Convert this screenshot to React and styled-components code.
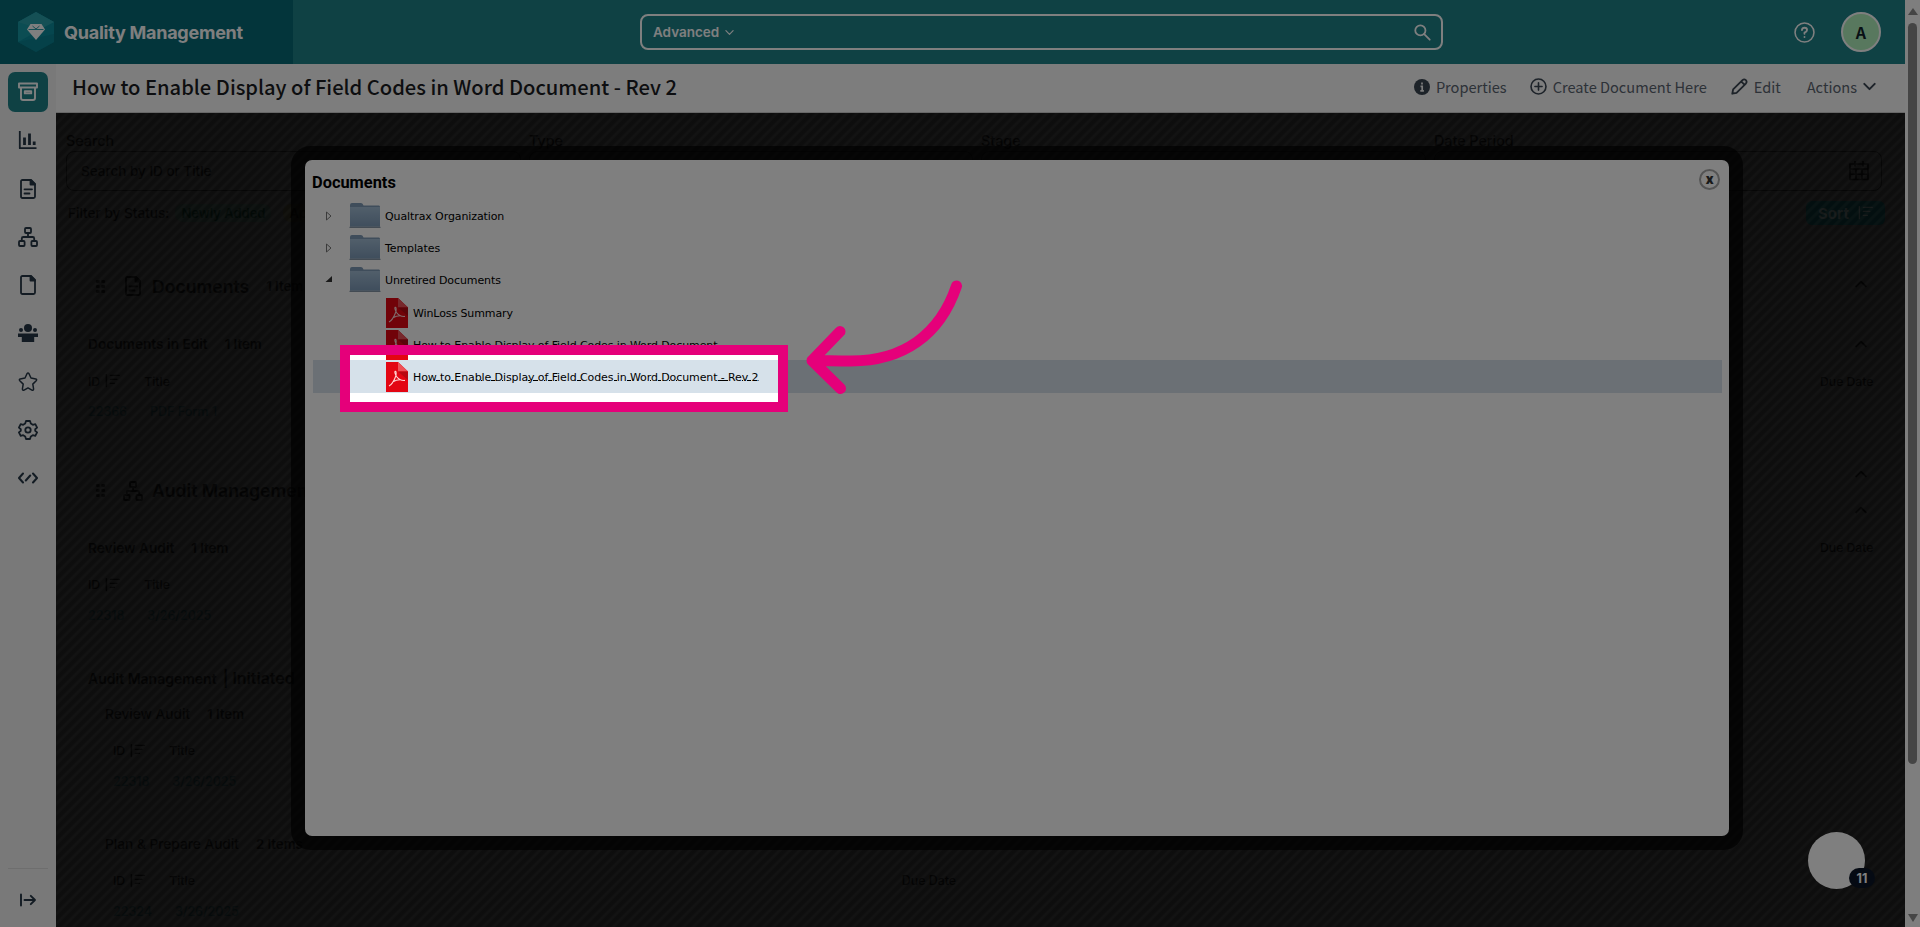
import styled, { createGlobalStyle } from 'styled-components';

const GlobalStyle = createGlobalStyle`
  * {
    box-sizing: border-box;
  }

  body {
    margin: 0;
    overflow: hidden;
    font-family: Inter, 'Open Sans', sans-serif;
  }
`;

const Page = styled.div`
  position: relative;
  display: flex;
  width: 1920px;
  height: 927px;
  overflow: hidden;
  background: #fff;
`;

const Screen = styled.div`
  display: flex;
  flex-direction: column;
  width: 1905px;
  height: 927px;
`;

const TopBar = styled.header`
  display: flex;
  align-items: center;
  height: 64px;
  flex: none;
  background: #1e8289;
  color: #fff;
`;

const Brand = styled.div`
  display: flex;
  align-items: center;
  gap: 10px;
  width: 293px;
  height: 64px;
  padding-left: 18px;
  background: #066a77;
  font-size: 18px;
  font-weight: 700;
  letter-spacing: -0.25px;
  white-space: nowrap;
`;

const SearchBox = styled.div`
  display: flex;
  align-items: center;
  width: 803px;
  height: 36px;
  margin-left: 347px;
  padding: 0 10px 0 11px;
  border: 2px solid #fff;
  border-radius: 8px;
  font-size: 13.5px;
  font-weight: 600;

  svg:first-of-type {
    margin-left: 6px;
  }

  svg:last-of-type {
    margin-left: auto;
  }
`;

const HelpIcon = styled.div`
  display: flex;
  margin-left: 351px;
`;

const Avatar = styled.div`
  display: flex;
  align-items: center;
  justify-content: center;
  width: 40px;
  height: 40px;
  margin-left: 26px;
  border: 2px solid #fff;
  border-radius: 50%;
  background: #b0f0bd;
  color: #10202a;
  font: 700 16px 'Noto Sans CJK SC', sans-serif;
  line-height: 34px;
`;

const Body = styled.div`
  display: flex;
  flex: 1;
  min-height: 0;
`;

const Sidebar = styled.nav`
  display: flex;
  flex-direction: column;
  align-items: center;
  width: 56px;
  padding: 8.2px 8px 7px;
  background: #f2f2f3;
  color: #263746;
`;

const NavItem = styled.div`
  display: flex;
  align-items: center;
  justify-content: center;
  width: 40px;
  height: 40px;
  margin-bottom: 8.25px;
  border-radius: 7px;
  background: ${({ $active }) => ($active ? '#1e8289' : 'transparent')};
  color: ${({ $active }) => ($active ? '#fff' : 'inherit')};
`;

const NavFooter = styled.div`
  width: 40px;
  margin-top: auto;
  padding-top: 11px;
  border-top: 1px solid #dcdcdc;

  ${NavItem} {
    margin: 0;
  }
`;

const Column = styled.div`
  display: flex;
  flex-direction: column;
  flex: 1;
  min-width: 0;
`;

const TitleBar = styled.div`
  display: flex;
  align-items: center;
  height: 49px;
  flex: none;
  padding: 0 29px 3px 16px;
  background: #fafafa;
  border-bottom: 1px solid #d0d0d0;
  font-family: 'Noto Sans CJK SC', sans-serif;
`;

const Title = styled.h1`
  margin: 0 auto 0 0;
  color: #1a1c22;
  font-size: 20.15px;
  font-weight: 500;
  line-height: 30px;
  white-space: nowrap;
`;

const Action = styled.div`
  display: flex;
  align-items: center;
  gap: 6px;
  margin-left: ${({ $gap }) => $gap}px;
  color: #5a6470;
  font-size: 14.6px;
  line-height: 24px;
  white-space: nowrap;

  svg {
    color: #3b4653;
  }
`;

const Workspace = styled.main`
  position: relative;
  flex: 1;
  overflow: hidden;
  padding: 18px 23px 0 10px;
  background: #191919;
  color: #040404;
  font-size: 14px;
  white-space: nowrap;
`;

const Stripes = styled.div`
  position: absolute;
  inset: 0;
  background: repeating-linear-gradient(
    135deg,
    rgba(255, 255, 255, 0.055) 0 1.6px,
    rgba(255, 255, 255, 0.012) 3px 5.6px,
    rgba(255, 255, 255, 0.055) 7.071px
  );
`;

const Filters = styled.div`
  display: grid;
  grid-template-columns: 455px 444px 445px 1fr;
  gap: 8px;
`;

const Field = styled.div`
  font-size: 14.3px;
  font-weight: 500;
  line-height: 20px;
`;

const Input = styled.div`
  display: flex;
  align-items: center;
  justify-content: space-between;
  height: 40px;
  padding: 0 12px 0 14px;
  border: 1px solid #0a0a0a;
  border-radius: 8px;
  font-size: 13.5px;
`;

const StatusRow = styled.div`
  display: flex;
  align-items: center;
  height: 24px;
  margin: 10px -3px 0 2px;
  font-size: 13.6px;
  font-weight: 500;
`;

const Pill = styled.span`
  margin-left: ${({ $gap }) => $gap}px;
  padding: 1px 6px;
  border-radius: 8px;
  background: ${({ $bg }) => $bg};
  color: ${({ $color }) => $color};
  font-size: 13px;
  font-weight: 600;
`;

const SortButton = styled.div`
  display: flex;
  align-items: center;
  justify-content: center;
  gap: 8px;
  width: 79px;
  height: 24px;
  margin-left: auto;
  border-radius: 6px;
  background: #041c1d;
  color: #283030;
  font-size: 15px;
  font-weight: 700;
`;

const Split = styled.div`
  display: flex;
  justify-content: space-between;
`;

const Line = styled.div`
  display: flex;
  align-items: center;
  gap: ${({ $space }) => $space ?? 17}px;
  height: 20px;
  margin-top: ${({ $top }) => $top}px;
  margin-left: ${({ $indent }) => $indent ?? 22}px;
  color: ${({ $link }) => ($link ? '#081213' : 'inherit')};
  font-size: ${({ $size }) => $size ?? 13.7}px;
  font-weight: ${({ $bold }) => ($bold ? 600 : 500)};

  small {
    font-size: 13.2px;
    font-weight: 600;
  }
`;

const Right = styled.div`
  display: flex;
  flex-direction: column;
  width: 62px;
`;

const Dots = styled.span`
  width: 11px;
  height: 15px;
  background: radial-gradient(circle, #050505 1.6px, transparent 2px) 0 0 / 5.5px 5px;
`;

const Dialog = styled.section`
  position: absolute;
  top: 160px;
  left: 305px;
  width: 1424px;
  height: 676px;
  padding: 10px 7px 0 8px;
  border-radius: 7px;
  background: #fff;
  box-shadow: 0 0 0 14px rgba(0, 0, 0, 0.66);
`;

const DialogHeader = styled.div`
  display: flex;
  align-items: center;
  justify-content: space-between;
  height: 30px;
  padding: 0 1px 6px 0;
  margin-left: -1px;
  color: #000;
  font: 700 16.4px Roboto, sans-serif;
`;

const Close = styled.div`
  display: flex;
  align-items: center;
  justify-content: center;
  width: 21px;
  height: 21px;
  margin: -5px 1px 0 0;
  border: 2px solid #a8a8a8;
  border-radius: 50%;
  color: #333;
  font-size: 15px;
  line-height: 1;
`;

const TreeRow = styled.div`
  display: flex;
  align-items: center;
  height: 32.1px;
  padding-top: 0.5px;
  background: ${({ $selected }) => ($selected ? '#d6e1ea' : 'transparent')};
  color: #000;
  font: 11px 'DejaVu Sans', sans-serif;
  letter-spacing: -0.1px;
  white-space: nowrap;
`;

const Toggle = styled.span`
  display: flex;
  width: 36px;
  padding-left: 12px;
`;

const Label = styled.span`
  margin-left: ${({ $gap }) => $gap}px;
  padding-top: 1px;
  text-decoration: ${({ $marked }) => ($marked ? 'underline 1px' : 'none')};
  text-underline-offset: -1px;
`;

const Indent = styled.span`
  width: 73px;
`;

const ChatBubble = styled.div`
  position: absolute;
  top: 832px;
  left: 1808px;
  width: 57px;
  height: 57px;
  border-radius: 50%;
  background: #fff;
`;

const Badge = styled.span`
  position: absolute;
  top: 36px;
  left: 41px;
  width: 26px;
  height: 20px;
  border-radius: 10px;
  background: #0b1526;
  color: #fff;
  font-size: 12.5px;
  font-weight: 700;
  line-height: 21px;
  text-align: center;
`;

const Scrollbar = styled.div`
  display: flex;
  flex-direction: column;
  align-items: center;
  width: 15px;
  padding: 8px 0 5px;
  background: #fcfcfc;
`;

const Thumb = styled.div`
  width: 9px;
  height: 741px;
  margin: 8px 0 auto;
  border-radius: 5px;
  background: #8b8b8b;
`;

// dims everything outside its frame
const Spotlight = styled.div`
  position: absolute;
  top: 354.5px;
  left: 350px;
  width: 428px;
  height: 47.5px;
  box-shadow: 0 0 0 10px #e5007a, 0 0 0 2400px rgba(0, 0, 0, 0.5);
`;

const Arrow = styled.svg`
  position: absolute;
  top: 270px;
  left: 800px;
`;

const Stroke = ({ size = 20, width = 1.8, children }) => (
  <svg
    width={size}
    height={size}
    viewBox="0 0 20 20"
    fill="none"
    stroke="currentColor"
    strokeWidth={width}
    strokeLinecap="round"
    strokeLinejoin="round"
  >
    {children}
  </svg>
);

const Logo = () => (
  <svg width="36" height="40" viewBox="0 0 36 40">
    <path d="M18 0 L36 10 V30 L18 40 L0 30 V10 Z" fill="#0c8c9c" />
    <path d="M18 0 L36 10 L0 30 V10 Z" fill="#199aa6" />
    <path d="M18 0 L36 10 L22 17 L0 10 Z" fill="#3aa7ae" opacity=".55" />
    <path d="M0 30 L36 22 V30 L18 40 Z" fill="#08798a" opacity=".5" />
    <path d="M12.5 12 H23.5 L27 17.5 L18 28 L9 17.5 Z" fill="#fff" />
    <path d="M10.5 17.5 H25.5 M14.5 14 L18 17 L21.5 14" fill="none" stroke="#14909d" strokeWidth="0.9" />
  </svg>
);

const ArchiveIcon = () => (
  <Stroke width={1.9}>
    <path d="M1 1.5 H19 V5.5 H1 Z M3 5.5 V16 Q3 18 5 18 H15 Q17 18 17 16 V5.5 M6.8 9.2 H13.2 V11.4 H6.8 Z" />
  </Stroke>
);

const ChartIcon = () => (
  <Stroke width={1.8}>
    <path d="M1.8 1 V18.2 H18.5" strokeLinecap="butt" />
    <path d="M6.5 7.5 V15 M11.5 3.5 V15 M16.2 11.5 V15" strokeWidth="2.8" strokeLinecap="butt" />
  </Stroke>
);

const DocIcon = ({ lines = true }) => (
  <Stroke width={1.8}>
    <path d="M4.5 1 H13 L17 5 V17.5 Q17 19 15.5 19 H4.5 Q3 19 3 17.5 V2.5 Q3 1 4.5 1 Z" />
    <path d="M12.5 1 V5.5 H17 Z" fill="currentColor" />
    {lines && <path d="M6.5 10.3 H14 M6.5 14.5 H11.5" />}
  </Stroke>
);

const TreeIcon = () => (
  <Stroke width={1.8}>
    <rect x="7" y="1" width="6" height="5" rx="1" />
    <rect x="1" y="14" width="5.6" height="5" rx="1" />
    <rect x="13.4" y="14" width="5.6" height="5" rx="1" />
    <path d="M10 6 V10 M3.8 14 V11.5 Q3.8 10 5.3 10 H14.7 Q16.2 10 16.2 11.5 V14" />
  </Stroke>
);

const PeopleIcon = () => (
  <svg width="20" height="20" viewBox="0 0 20 20" fill="currentColor">
    <circle cx="10" cy="5" r="4" />
    <circle cx="3" cy="7" r="2" />
    <circle cx="17" cy="7" r="2" />
    <path d="M0 10.5 H20 V14 H16.2 V19 H3.8 V14 H0 Z" />
  </svg>
);

const StarIcon = () => (
  <Stroke width={1.5}>
    <path d="M9 1.7 Q10 .2 11 1.7 L13 6 L17.8 6.9 Q19.3 7.5 18.2 8.7 L14.8 12.1 L15.6 17 Q15.5 18.8 13.9 18.1 L10 15.9 L6.1 18.1 Q4.5 18.8 4.4 17 L5.2 12.1 L1.8 8.7 Q.7 7.5 2.2 6.9 L7 6 Z" />
  </Stroke>
);

const GearIcon = () => (
  <Stroke width={1.8}>
    <path d="M8 1 H12 L12.8 3.6 L14.8 4.8 L17.3 4.1 L19.1 7.6 L17.2 9.2 V10.8 L19.1 12.4 L17.3 15.9 L14.8 15.2 L12.8 16.4 L12 19 H8 L7.2 16.4 L5.2 15.2 L2.7 15.9 L.9 12.4 L2.8 10.8 V9.2 L.9 7.6 L2.7 4.1 L5.2 4.8 L7.2 3.6 Z" />
    <circle cx="10" cy="10" r="2.7" />
  </Stroke>
);

const CodeIcon = () => (
  <Stroke width={2}>
    <path d="M5 5.5 L1 10 L5 14.5 M15 5.5 L19 10 L15 14.5 M12.2 7.5 L7.8 12.5" />
  </Stroke>
);

const ExpandIcon = () => (
  <Stroke width={1.9}>
    <path d="M3 4.5 V15.5 M6.5 10 H17 M12.8 5.8 L17 10 L12.8 14.2" />
  </Stroke>
);

const SortIcon = () => (
  <Stroke size={16} width={1.8}>
    <path d="M3 2 V17 M8 3 H19 M8 8 H16 M8 13 H13" />
  </Stroke>
);

const Chevron = ({ up, size = 12, width = 3 }) => (
  <Stroke size={size} width={width}>
    <path d={up ? 'M2 14 L10 6 L18 14' : 'M2 6 L10 14 L18 6'} />
  </Stroke>
);

const CalendarIcon = () => (
  <Stroke width={1.6}>
    <path d="M1 3 H19 V18.5 H1 Z M1 8 H19 M1 13.3 H19 M7 8 V18.5 M13 8 V18.5 M6 0 V5 M14 0 V5" />
  </Stroke>
);

const Folder = () => (
  <svg width="32" height="26" viewBox="0 0 32 26">
    <defs>
      <linearGradient id="folder" x1="0" y1="0" x2="0" y2="1">
        <stop offset="0" stopColor="#a3bed6" />
        <stop offset="1" stopColor="#7f9cba" />
      </linearGradient>
    </defs>
    <path d="M1 2 Q1 0 3 0 H12 Q14 0 14.5 2.5 H30 Q31 2.5 31 4 V23.5 H1 Z" fill="#7e9ab6" />
    <path d="M1 4 H31 V23.5 H1 Z" fill="url(#folder)" />
    <path d="M.5 24.3 H31.5" stroke="#6a7c91" strokeWidth="1" />
  </svg>
);

const PdfIcon = () => (
  <svg width="22" height="30" viewBox="0 0 22 30">
    <path d="M0 0 H12 L22 9.5 V30 H0 Z" fill="#e30613" />
    <path d="M12 0 L22 9.5 H12 Z" fill="#ee5158" />
    <path d="M12 9.5 H22 V18 Z" fill="#b80812" />
    <path
      d="M3 24 Q7 22 10 13.5 Q10.5 9 9.2 9.3 Q8 10 10.5 14.5 Q13.5 18.8 19 18.4 M6.5 20 Q11 17.5 15 17.8"
      fill="none"
      stroke="#ffd5d5"
      strokeWidth="1.1"
    />
  </svg>
);

const folders = [
  { name: 'Qualtrax Organization' },
  { name: 'Templates' },
  { name: 'Unretired Documents', open: true },
];

const files = [
  { name: 'WinLoss Summary' },
  { name: 'How to Enable Display of Field Codes in Word Document' },
  { name: 'How to Enable Display of Field Codes in Word Document - Rev 2', selected: true },
];

const navIcons = [
  <ArchiveIcon />,
  <ChartIcon />,
  <DocIcon />,
  <TreeIcon />,
  <DocIcon lines={false} />,
  <PeopleIcon />,
  <StarIcon />,
  <GearIcon />,
  <CodeIcon />,
];

const Tasks = ({ top, indent, id, title }) => (
  <>
    <Line $top={top} $indent={indent} $space={24} $size={12.3}>
      <Line as="span" $top={0} $indent={0} $space={4} $size={12.3}>
        ID <SortIcon />
      </Line>
      <span>Title</span>
    </Line>
    <Line $top={10.5} $indent={indent} $space={23} $size={12.5} $link>
      <span>{id}</span>
      <span>{title}</span>
    </Line>
  </>
);

const Background = () => (
  <Workspace>
    <Filters>
      <Field>
        Search
        <Input>Search by ID or Title</Input>
      </Field>
      <Field>
        Type
        <Input />
      </Field>
      <Field>
        Stage
        <Input />
      </Field>
      <Field>
        Date Period
        <Input>
          <span />
          <CalendarIcon />
        </Input>
      </Field>
    </Filters>
    <StatusRow>
      Filter by Status:
      <Pill $gap={6} $bg="#141c19" $color="#020f0a">
        Newly Added
      </Pill>
      <Pill $gap={12} $bg="#1b1a12" $color="#0a0802">
        Approved
      </Pill>
      <SortButton>
        Sort <SortIcon />
      </SortButton>
    </StatusRow>
    <Split>
      <div>
        <Line $top={51} $indent={29} $size={17.6} $bold>
          <Dots />
          <DocIcon />
          <span style={{ marginLeft: -8 }}>Documents</span>
          <small>1 Item</small>
        </Line>
        <Line $top={38} $bold>
          Documents in Edit <small>1 Item</small>
        </Line>
        <Tasks top={17} id="22366" title="PDF Form 1" />
        <Line $top={59} $indent={29} $size={17.6} $bold>
          <Dots />
          <TreeIcon />
          <span style={{ marginLeft: -8 }}>Audit Management</span>
        </Line>
        <Line $top={37} $bold>
          Review Audit <small>1 Item</small>
        </Line>
        <Tasks top={17} id="22318" title="3/26/2025" />
        <Line $top={43} $space={6} $size={14} $bold>
          Audit Management <span style={{ fontSize: 16 }}>| Initiated</span>
        </Line>
        <Line $top={16} $indent={39}>
          Review Audit <small>1 Item</small>
        </Line>
        <Tasks top={16.5} indent={47} id="22318" title="3/26/2025" />
        <Line $top={43} $indent={39}>
          Plan &amp; Prepare Audit <small>2 Items</small>
        </Line>
        <Split>
          <div>
            <Tasks top={16.5} indent={47} id="22324" title="3/26/2025" />
          </div>
          <Line $top={16.5} $indent={663} $size={12.4}>
            Due Date
          </Line>
        </Split>
      </div>
      <Right>
        <Line $top={49} $indent={35}>
          <Chevron up />
        </Line>
        <Line $top={40} $indent={35}>
          <Chevron up />
        </Line>
        <Line $top={17} $indent={0} $size={12.2}>
          Due Date
        </Line>
        <Line $top={73} $indent={35}>
          <Chevron up />
        </Line>
        <Line $top={16} $indent={35}>
          <Chevron up />
        </Line>
        <Line $top={17} $indent={0} $size={12.2}>
          Due Date
        </Line>
      </Right>
    </Split>
    <Stripes />
  </Workspace>
);

const DocumentsDialog = () => (
  <Dialog>
    <DialogHeader>
      Documents
      <Close>
        <b>x</b>
      </Close>
    </DialogHeader>
    {folders.map(({ name, open }) => (
      <TreeRow key={name}>
        <Toggle>
          <svg width="8" height="10" viewBox="0 0 8 10">
            {open ? (
              <path d="M7 1 V7 H.5 Z" fill="#333" />
            ) : (
              <path d="M1.5 1 L6 5 L1.5 9 Z" fill="none" stroke="#777" />
            )}
          </svg>
        </Toggle>
        <Folder />
        <Label $gap={4}>{name}</Label>
      </TreeRow>
    ))}
    {files.map(({ name, selected }) => (
      <TreeRow key={name} $selected={selected}>
        <Indent />
        <PdfIcon />
        <Label $gap={5} $marked={selected}>
          {name}
        </Label>
      </TreeRow>
    ))}
  </Dialog>
);

const App = () => (
  <Page>
    <GlobalStyle />
    <Screen>
      <TopBar>
        <Brand>
          <Logo />
          Quality Management
        </Brand>
        <SearchBox>
          Advanced
          <Chevron size={9} width={2.6} />
          <Stroke size={17} width={2.1}>
            <circle cx="7.5" cy="7.5" r="6" />
            <path d="M12 12 L18.5 18.5" />
          </Stroke>
        </SearchBox>
        <HelpIcon>
          <Stroke size={21} width={1.5}>
            <circle cx="10" cy="10" r="9" />
            <path d="M7.6 7.6 Q7.8 5.5 10 5.5 Q12.4 5.5 12.4 7.6 Q12.4 9 10 10.2 V11.3 M10 14.2 V14.4" strokeWidth="1.8" />
          </Stroke>
        </HelpIcon>
        <Avatar>A</Avatar>
      </TopBar>
      <Body>
        <Sidebar>
          {navIcons.map((icon, index) => (
            <NavItem key={index} $active={index === 0}>
              {icon}
            </NavItem>
          ))}
          <NavFooter>
            <NavItem>
              <ExpandIcon />
            </NavItem>
          </NavFooter>
        </Sidebar>
        <Column>
          <TitleBar>
            <Title>How to Enable Display of Field Codes in Word Document - Rev 2</Title>
            <Action $gap={0}>
              <svg width="16" height="16" viewBox="0 0 16 16">
                <circle cx="8" cy="8" r="8" fill="currentColor" />
                <path d="M8 3.4 V5.4 M6.5 7.3 H8.2 V11.6 M6.3 11.8 H9.9" stroke="#fafafa" strokeWidth="1.7" fill="none" />
              </svg>
              Properties
            </Action>
            <Action $gap={23}>
              <Stroke size={17} width={1.9}>
                <circle cx="10" cy="10" r="8.8" />
                <path d="M10 5.8 V14.2 M5.8 10 H14.2" />
              </Stroke>
              Create Document Here
            </Action>
            <Action $gap={24}>
              <Stroke size={17} width={2.1}>
                <path d="M1.5 18.5 L2.5 13.5 L13.5 2.5 Q15.5 .8 17.5 2.5 Q19.2 4.5 17.5 6.5 L6.5 17.5 Z M12 4 L16 8" />
              </Stroke>
              Edit
            </Action>
            <Action $gap={26}>
              Actions
              <Chevron size={13} width={3} />
            </Action>
          </TitleBar>
          <Background />
        </Column>
      </Body>
    </Screen>
    <Scrollbar>
      <svg width="10" height="7" viewBox="0 0 10 7">
        <path d="M5 0 L10 7 H0 Z" fill="#8b8b8b" />
      </svg>
      <Thumb />
      <svg width="10" height="8" viewBox="0 0 10 8">
        <path d="M0 0 H10 L5 8 Z" fill="#8b8b8b" />
      </svg>
    </Scrollbar>
    <DocumentsDialog />
    <ChatBubble>
      <Badge>11</Badge>
    </ChatBubble>
    <Spotlight />
    <Arrow width="170" height="140" viewBox="800 270 170 140" fill="none" stroke="#e5007a" strokeWidth="11" strokeLinecap="round" strokeLinejoin="round">
      <path d="M956.5 286 C940 335 903 361 851 361 C836 361 825 360.5 812 360.5 M840 331.5 L812 360.5 L840.5 388.5" />
    </Arrow>
  </Page>
);

export default App;
